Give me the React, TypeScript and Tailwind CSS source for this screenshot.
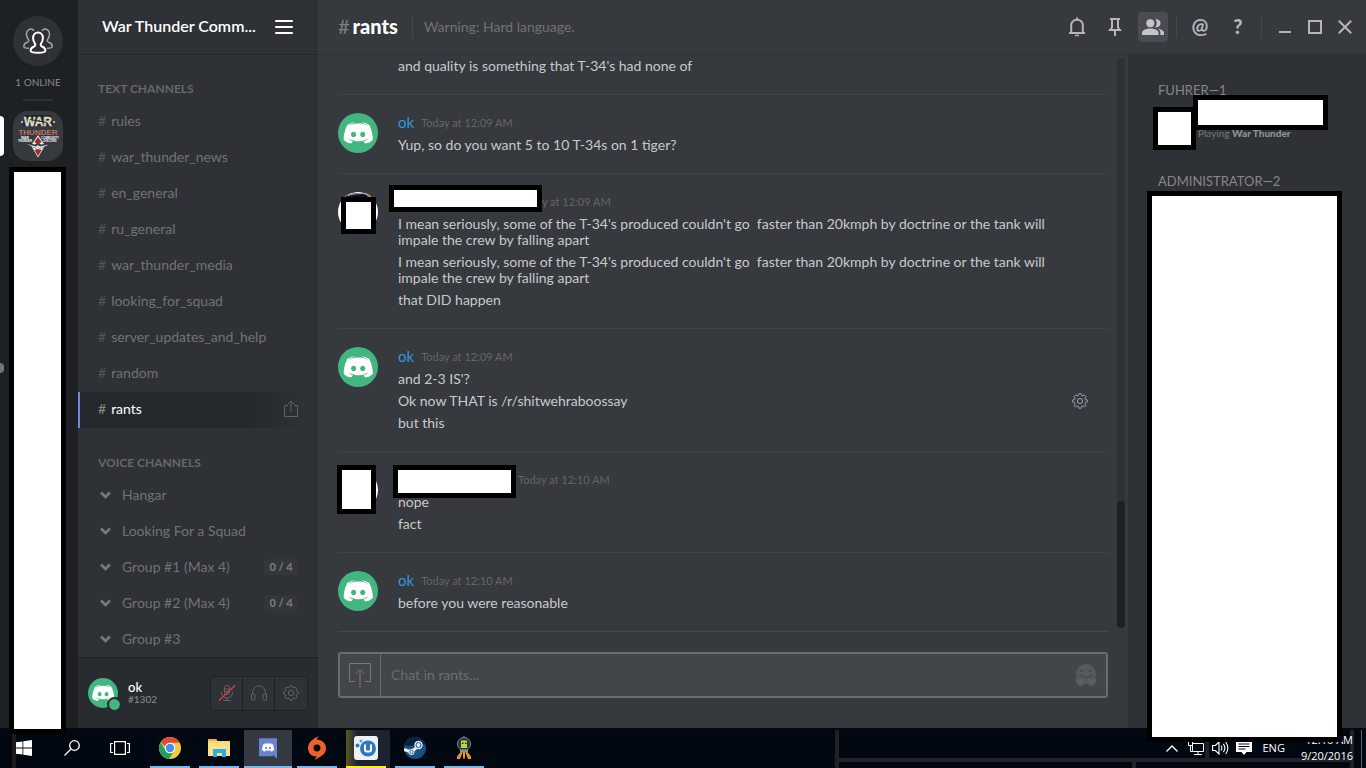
import React from "react";

const FACE =
  "M150.9 150.6s-3.6-4.3-6.6-8.1c13.1-3.7 18.1-11.9 18.1-11.9-4.1 2.7-8 4.6-11.5 5.9-5 2.1-9.8 3.5-14.5 4.3-9.6 1.8-18.4 1.3-25.9-.1-5.7-1.1-10.6-2.7-14.7-4.3-2.3-.9-4.8-2-7.3-3.4-.3-.2-.6-.3-.9-.5-.2-.1-.3-.2-.4-.3-1.8-1-2.8-1.7-2.8-1.7s4.8 8 17.5 11.8c-3 3.8-6.7 8.3-6.7 8.3-22.1-.7-30.5-15.2-30.5-15.2 0-32.2 14.4-58.3 14.4-58.3 14.4-10.8 28.1-10.5 28.1-10.5l1 1.2c-18 5.2-26.3 13.1-26.3 13.1s2.2-1.2 5.9-2.9c10.7-4.7 19.2-6 22.7-6.3.6-.1 1.1-.2 1.7-.2 6.1-.8 13-1 20.2-.2 9.5 1.1 19.7 3.9 30.1 9.6 0 0-7.9-7.5-24.9-12.7l1.4-1.6s13.7-.3 28.1 10.5c0 0 14.4 26.1 14.4 58.3 0 0-8.5 14.5-30.6 15.2z";
const EYES =
  "M104.4 103.9c-5.7 0-10.2 5-10.2 11.1s4.6 11.1 10.2 11.1c5.7 0 10.2-5 10.2-11.1.1-6.1-4.5-11.1-10.2-11.1zM140.9 103.9c-5.7 0-10.2 5-10.2 11.1s4.6 11.1 10.2 11.1c5.7 0 10.2-5 10.2-11.1s-4.5-11.1-10.2-11.1z";

function DiscordAvatar({ className }: { className: string }) {
  return (
    <svg viewBox="42 29 160 160" className={className} aria-hidden="true">
      <circle cx="122" cy="109" r="80" fill="#43b581" />
      <path d={FACE} fill="#fff" />
      <path d={EYES} fill="#43b581" />
    </svg>
  );
}

function Redaction({ className }: { className: string }) {
  return <div className={`border-5 border-black bg-white ${className}`} />;
}

function Gear({ className }: { className: string }) {
  return (
    <svg viewBox="0 0 16 16" className={className} fill="none" stroke="currentColor" aria-hidden="true">
      <path d="M6.6 2.3 7 .7h2l.4 1.6 1.5.6 1.5-.9 1.5 1.5-.9 1.5.6 1.5 1.7.5v2l-1.7.4-.6 1.5.9 1.5-1.5 1.5-1.5-.9-1.5.6L9 15.3H7l-.4-1.7-1.5-.6-1.5.9-1.5-1.5.9-1.5-.6-1.5L.7 9V7l1.7-.5.6-1.5-.9-1.5L3.6 2l1.5.9z" strokeLinejoin="round" />
      <circle cx="8" cy="8" r="2.6" />
    </svg>
  );
}

/* ---------- server rail ---------- */

function ServerRail() {
  return (
    <nav aria-label="Servers" className="relative z-10 flex w-[78px] shrink-0 flex-col bg-[#1e2124]">
      <div className="flex w-[76px] flex-col items-center pt-4">
        <button aria-label="Friends" className="flex size-[50px] items-center justify-center rounded-full bg-[#2e3136]">
          <svg viewBox="0 0 30 26" className="h-[26px] w-[30px]" fill="none" strokeLinecap="round" aria-hidden="true">
            <g stroke="#a3a5a8" strokeWidth="1.5">
              <path d="M10.500 2.200C7-.4 3 2.200 3.500 6.600c.2 2 .9 3.600 2 5 .6 1.600-.2 2.300-1.800 2.900C1.600 15.300.8 16.500.8 18.600c0 1.200 2.400 1.700 4.700 1.700" />
              <path d="M19.500 2.200C23-.4 27 2.200 26.500 6.600c-.2 2-.9 3.600-2 5-.6 1.600.2 2.300 1.800 2.900 2.100.8 2.900 2 2.900 4.100 0 1.200-2.400 1.700-4.700 1.700" />
            </g>
            <path d="M15 4.500c-3 0-4.900 2.300-4.900 5.500 0 2.600.9 4.500 2 5.900.5 1.600-.1 2.300-1.500 2.900-2 .8-3 1.700-3 4 0 1.600 4 2 7.400 2s7.400-.4 7.400-2c0-2.300-1-3.200-3-4-1.400-.6-2-1.300-1.500-2.900 1.100-1.400 2-3.300 2-5.900 0-3.200-1.900-5.500-4.900-5.500z" stroke="#fff" strokeWidth="2" />
          </svg>
        </button>
        <div className="mt-2 h-4 text-[10px] leading-4 text-[#85878a]">1 ONLINE</div>
        <div className="mt-[9px] h-0.5 w-[30px] bg-[#2e3136]" />
        <div className="mt-2.5">
          <button aria-label="War Thunder Community" className="block size-[50px] overflow-hidden rounded-[15px] bg-[#36393e]">
            <svg viewBox="0 0 50 50" className="size-full" aria-hidden="true">
              <path d="M12 4h26l2 11H10z" fill="#1c1f24" opacity=".8" />
              <g textAnchor="middle" fontFamily="Liberation Sans, sans-serif" fontWeight="700">
                <text x="25" y="14.500" fontSize="12" fill="#dcd8c2" stroke="#dcd8c2" strokeWidth=".4">WAR</text>
                <text x="25" y="23.500" fontSize="8" fill="#c9806e" stroke="#7a3f35" strokeWidth=".2">THUNDER</text>
                <text x="12" y="27.500" fontSize="3.400" fill="#fff">WAR</text>
                <text x="12" y="30.500" fontSize="2.900" fill="#fff">THUNDER</text>
                <text x="37" y="27.500" fontSize="2.900" fill="#fff">COMMUNITY</text>
                <text x="37" y="30.500" fontSize="2.900" fill="#fff">DISCORD</text>
              </g>
              <path d="M17 8.500 34 11.500" stroke="#23262b" strokeWidth="1" />
              <circle cx="9" cy="11" r="1" fill="#ddd" />
              <circle cx="41" cy="11" r="1" fill="#ddd" />
              <path d="M25 24 32 34.500 25 46.500 18 34.500z" fill="#e9e9e9" />
              <path d="M25 26 28.500 31 25 33.500 21.500 31zM25 38l3.500 1L25 45 21.500 39z" fill="#a8272b" />
              <path d="M13 31.500 22 33.500l3-2 3 2 9-1.500-7 4.500-5 2-5-2z" fill="#3b3f44" />
              <path d="M14 33 23 35.500l2-1.500 2 1.500 9-2-9 4-2 .8-2-.8z" fill="#dfe1e3" />
            </svg>
          </button>
        </div>
      </div>
      <Redaction className="mt-1.5 -mb-1.5 ml-[9px] w-[57px] flex-1" />
      <div className="absolute top-[116px] left-0 h-10 w-1 rounded-r-[4px] bg-white" />
      <div className="absolute top-[363px] left-0 h-2.5 w-1 rounded-r-[5px] bg-[#72767a]" />
    </nav>
  );
}

/* ---------- channel list ---------- */

const textChannels = [
  "rules",
  "war_thunder_news",
  "en_general",
  "ru_general",
  "war_thunder_media",
  "looking_for_squad",
  "server_updates_and_help",
  "random",
  "rants",
];

const voiceChannels: { name: string; limit?: string }[] = [
  { name: "Hangar" },
  { name: "Looking For a Squad" },
  { name: "Group #1 (Max 4)", limit: "0 / 4" },
  { name: "Group #2 (Max 4)", limit: "0 / 4" },
  { name: "Group #3" },
];

function TextChannel({ name, active }: { name: string; active: boolean }) {
  return (
    <li
      className={`flex h-9 items-center border-l-2 pl-[18px] pr-5 text-sm ${
        active
          ? "border-[#7289da] bg-linear-to-r from-[#25282c] from-70% to-[#2e3136] to-95%"
          : "border-transparent"
      }`}
    >
      <a href="#channel" className="flex flex-1 gap-[5px] pb-0.5">
        <span className={active ? "text-[#8a8c8f]" : "text-[#515458]"}>#</span>
        <span className={active ? "text-white" : "text-[#707276]"}>{name}</span>
      </a>
      {active && (
        <button aria-label="Invite" className="pb-1 text-[#5d6064]">
          <svg viewBox="0 0 14 17" className="h-[17px] w-3.5" fill="none" stroke="currentColor" aria-hidden="true">
            <path d="M4 5.500H.5v11h13v-11H10M7 12V1M4 4l3-3 3 3" />
          </svg>
        </button>
      )}
    </li>
  );
}

function VoiceChannel({ name, limit }: { name: string; limit?: string }) {
  return (
    <li className="flex h-9 items-center pr-5 pb-0.5 pl-[22px] text-sm text-[#707276]">
      <svg viewBox="0 0 11 8" className="h-2 w-[11px]" fill="none" stroke="#77797c" strokeWidth="2.600" aria-hidden="true">
        <path d="M1 1.500 5.500 6 10 1.500" />
      </svg>
      <a href="#voice" className="ml-[11px] flex-1">
        {name}
      </a>
      {limit && <span className="flex h-4 w-[34px] items-center justify-center rounded-[4px] bg-[#33363b] text-[11px] font-black text-[#77797c]">{limit}</span>}
    </li>
  );
}

function Sidebar() {
  return (
    <aside className="flex w-60 shrink-0 flex-col bg-[#2e3136]">
      <header className="flex h-[55px] shrink-0 items-center justify-between border-b border-[#25282c] pr-[25px] pl-6">
        <h1 className="pb-0.5 text-base font-semibold text-white">War Thunder Comm...</h1>
        <button aria-label="Server menu" className="flex w-[18px] flex-col gap-1">
          <span className="h-0.5 rounded-xs bg-white" />
          <span className="h-0.5 rounded-xs bg-white" />
          <span className="h-0.5 rounded-xs bg-white" />
        </button>
      </header>
      <div className="min-h-0 flex-1 overflow-hidden pt-[26px]">
        <h2 className="mb-[7px] pl-5 text-xs leading-4 font-bold text-[#66686c]">TEXT CHANNELS</h2>
        <ul>
          {textChannels.map((name) => (
            <TextChannel key={name} name={name} active={name === "rants"} />
          ))}
        </ul>
        <h2 className="mt-[27px] mb-[7px] pl-5 text-xs leading-4 font-bold text-[#66686c]">VOICE CHANNELS</h2>
        <ul>
          {voiceChannels.map((c) => (
            <VoiceChannel key={c.name} {...c} />
          ))}
        </ul>
      </div>
      <footer className="flex h-[71px] shrink-0 items-center border-t border-[#1e2124] bg-[#282b30] px-2.5">
        <div className="relative">
          <DiscordAvatar className="size-[30px]" />
          <span className="absolute -right-[2px] -bottom-[2px] size-[11px] rounded-full bg-[#43b581] outline-2 outline-[#282b30]" />
        </div>
        <div className="ml-2.5 flex-1">
          <div className="text-[13px] leading-3 font-medium text-white">ok</div>
          <div className="text-[10px] leading-3 text-[#8a8c8f]">#1302</div>
        </div>
        <div className="flex h-[35px] divide-x divide-[#1e2124] rounded-[4px] border border-[#1e2124] bg-[#2e3136] text-[#5f6266]">
          <button aria-label="Unmute" className="flex w-8 items-center justify-center">
            <svg viewBox="0 0 18 18" className="size-[18px]" fill="none" stroke="currentColor" aria-hidden="true">
              <rect x="6.500" y="1.500" width="5" height="9" rx="2.500" />
              <path d="M3.500 8v1a5.500 5 0 0 0 11 0V8M9 14v2.500M5 16.500h8M7 5h4M7 7.500h4" />
              <path d="M1 16.500 17 1.500" stroke="#d84040" strokeWidth="1.400" />
            </svg>
          </button>
          <button aria-label="Deafen" className="flex w-8 items-center justify-center">
            <svg viewBox="0 0 18 18" className="size-[18px]" fill="none" stroke="currentColor" aria-hidden="true">
              <path d="M2.500 10V8.500a6.500 6.500 0 0 1 13 0V10" />
              <rect x="1.500" y="10" width="3.500" height="6" rx="1" />
              <rect x="13" y="10" width="3.500" height="6" rx="1" />
            </svg>
          </button>
          <button aria-label="User settings" className="flex w-8 items-center justify-center">
            <Gear className="size-4" />
          </button>
        </div>
      </footer>
    </aside>
  );
}

/* ---------- chat ---------- */

function TopBar() {
  return (
    <header className="flex h-[55px] shrink-0 items-center border-b border-[#2e3136] bg-[#36393e] pr-3.5 pl-5 text-[#b4b6b8]">
      <h2 className="flex gap-[3px] pb-0.5 text-xl font-black text-white">
        <span className="font-normal text-[#7e8083]">#</span>rants
      </h2>
      <div className="ml-3.5 h-[22px] w-px bg-[#44474c]" />
      <p className="ml-[11px] flex-1 text-sm text-[#707276]">Warning: Hard language.</p>
      <div className="flex items-center gap-2">
        <button aria-label="Notifications" className="flex size-[30px] items-center justify-center">
          <svg viewBox="0 0 18 20" className="h-5 w-[18px]" fill="none" stroke="currentColor" strokeWidth="2" aria-hidden="true">
            <path d="M3.200 16V8.500c0-3.600 2.500-5.800 5.800-5.800s5.800 2.200 5.800 5.800V16M1 16h16" />
            <path d="M8 1.500h2" />
            <path d="M7 18.500h4" strokeWidth="1.400" />
          </svg>
        </button>
        <button aria-label="Pinned messages" className="flex size-[30px] items-center justify-center">
          <svg viewBox="0 0 14 18" className="h-[18px] w-3.5" fill="none" stroke="currentColor" strokeWidth="2" aria-hidden="true">
            <path d="M2 1h10M4 1v8.500L2 12h10L10 9.500V1M7 12.500V18" />
          </svg>
        </button>
        <button aria-label="Member list" className="flex size-[30px] items-center justify-center rounded-[4px] bg-[#494d53]">
          <svg viewBox="0 0 22 16" className="h-4 w-[22px]" fill="#c3c5c8" aria-hidden="true">
            <circle cx="8.300" cy="4.200" r="4" />
            <path d="M13.300.4a4 4 0 1 1 0 7.600 5.600 5.600 0 0 0 0-7.600z" />
            <path d="M0 16v-2.200c0-2.900 5-4.300 8.300-4.300s8.300 1.400 8.300 4.300V16z" />
            <path d="M18.400 16v-2.200c0-1.600-.9-2.900-2.400-4 3 .5 6 1.900 6 4V16z" />
          </svg>
        </button>
      </div>
      <div className="mx-2 h-[22px] w-px bg-[#44474c]" />
      <div className="flex items-center gap-2">
        <button aria-label="Mentions" className="flex size-[30px] items-center justify-center pb-1 text-xl font-bold">@</button>
        <button aria-label="Help" className="flex size-[30px] items-center justify-center pb-0.5 text-xl font-black">?</button>
      </div>
      <div className="mx-2 h-[22px] w-px bg-[#44474c]" />
      <div className="ml-2 flex items-center gap-4">
        <button aria-label="Minimize">
          <svg viewBox="0 0 14 14" className="size-3.5" fill="none" stroke="currentColor" strokeWidth="2" aria-hidden="true">
            <path d="M1 12h12" />
          </svg>
        </button>
        <button aria-label="Maximize">
          <svg viewBox="0 0 14 14" className="size-3.5" fill="none" stroke="currentColor" strokeWidth="2" aria-hidden="true">
            <path d="M1 1h12v12H1z" />
          </svg>
        </button>
        <button aria-label="Close">
          <svg viewBox="0 0 14 14" className="size-3.5" fill="none" stroke="currentColor" strokeWidth="2" aria-hidden="true">
            <path d="M.8.8 13.200 13.200M13.200.8.8 13.200" />
          </svg>
        </button>
      </div>
    </header>
  );
}

function Message({ children, menu }: { children: React.ReactNode; menu?: boolean }) {
  return (
    <div className="flex items-center justify-between py-[3px] text-sm leading-4 text-[#c8c9cb]">
      <p className="max-w-[666px] whitespace-pre-wrap">{children}</p>
      {menu && (
        <button aria-label="Message options" className="mr-5 text-[#8fa3ad]">
          <Gear className="size-4" />
        </button>
      )}
    </div>
  );
}

function Group({
  avatar,
  name,
  time,
  last,
  children,
}: {
  avatar: React.ReactNode;
  name: React.ReactNode;
  time: string;
  last?: boolean;
  children: React.ReactNode;
}) {
  return (
    <article className={`flex shrink-0 gap-5 py-[17px] ${last ? "" : "border-b border-[#3f4247]"}`}>
      <div className="relative mt-px size-10 shrink-0">{avatar}</div>
      <div className="min-w-0 flex-1">
        <div className="relative flex h-[22px] items-center gap-[7px] pb-px">
          {name}
          <time className="pt-0.5 text-[11px] text-[#63656a]">{time}</time>
        </div>
        {children}
      </div>
    </article>
  );
}

const okName = <span className="text-[15px] text-[#3498db]">ok</span>;

const longRant =
  "I mean seriously, some of the T-34's produced couldn't go  faster than 20kmph by doctrine or the tank will impale the crew by falling apart";

function Chat() {
  return (
    <main className="flex min-w-0 flex-1 flex-col bg-[#36393e]">
      <div className="flex min-h-0 flex-1">
        <div className="flex min-w-0 flex-1 flex-col justify-end overflow-hidden pl-5">
          <div className="shrink-0 border-b border-[#3f4247] pb-[17px] pl-[60px]">
            <Message>and quality is something that T-34's had none of</Message>
          </div>
          <Group avatar={<DiscordAvatar className="size-10" />} name={okName} time="Today at 12:09 AM">
            <Message>Yup, so do you want 5 to 10 T-34s on 1 tiger?</Message>
          </Group>
          <Group
            avatar={
              <>
                <svg viewBox="0 0 40 40" className="size-10" aria-hidden="true">
                  <circle cx="20" cy="20" r="20" fill="#fff" />
                  <path d="M7 5C14 0 26-1 34 6v6H7z" fill="#0d1620" />
                  <path d="M29 1.500 33 4v2l-4-2z" fill="#c39a2c" />
                  <path d="M10 3.500C16 1.500 24 1 29 2" stroke="#aab" fill="none" />
                </svg>
                <Redaction className="absolute top-[5px] left-[3px] h-[37px] w-[35px]" />
              </>
            }
            name={
              <>
                <span className="w-[114px]" />
                <Redaction className="absolute -top-1.5 -left-[9px] h-[27px] w-[153px]" />
              </>
            }
            time="Today at 12:09 AM"
          >
            <Message>{longRant}</Message>
            <Message>{longRant}</Message>
            <Message>that DID happen</Message>
          </Group>
          <Group avatar={<DiscordAvatar className="size-10" />} name={okName} time="Today at 12:09 AM">
            <Message>and 2-3 IS'?</Message>
            <Message menu>Ok now THAT is /r/shitwehraboossay</Message>
            <Message>but this</Message>
          </Group>
          <Group
            avatar={
              <>
                <div className="size-10 rounded-full bg-white" />
                <Redaction className="absolute -top-[5px] -left-px h-[49px] w-[39px]" />
              </>
            }
            name={
              <>
                <span className="w-[113px]" />
                <Redaction className="absolute -top-1 -left-[5px] h-[33px] w-[123px]" />
              </>
            }
            time="Today at 12:10 AM"
          >
            <Message>nope</Message>
            <Message>fact</Message>
          </Group>
          <Group avatar={<DiscordAvatar className="size-10" />} name={okName} time="Today at 12:10 AM" last>
            <Message>before you were reasonable</Message>
          </Group>
        </div>
        <div className="my-[3px] mr-[3px] ml-[9px] flex w-2 flex-col justify-end rounded-[4px] bg-[#2e3136]">
          <div className="h-[127px] rounded-[4px] bg-[#1e2124]" />
        </div>
      </div>
      <form className="mx-5 shrink-0 border-t border-[#44474c] pt-5 pb-[30px]">
        <div className="flex h-[46px] items-stretch rounded-[3px] border-2 border-[#6a6d70] bg-[#424549]">
          <button type="button" aria-label="Upload a file" className="flex w-[41px] items-center justify-center border-r border-[#6a6d70] text-[#77797c]">
            <svg viewBox="0 0 22 26" className="h-[26px] w-[22px]" fill="none" stroke="currentColor" aria-hidden="true">
              <path d="M6 19.500H.5v-18h21v18H16M11 25.500V8M6.500 12 11 7.500l4.500 4.500" />
            </svg>
          </button>
          <input aria-label="Chat in rants" placeholder="Chat in rants..." className="min-w-0 flex-1 bg-transparent pl-2.5 text-sm text-white outline-none placeholder:text-[#6a6d70]" />
          <button type="button" aria-label="Emoji" className="mr-[9px] flex items-center">
            <svg viewBox="0 0 22 22" className="size-[22px]" aria-hidden="true">
              <circle cx="11" cy="10" r="10" fill="#565a5e" />
              <path d="M5 7.500q1.500-2 3.500 0M13.500 7.500q2-2 3.500 0M5 10.500q6 6 12 0" fill="none" stroke="#44474b" strokeWidth="1.200" />
              <path d="M.5 13.500 3 15l1.500-3 1.500.5-.5 2.500L8 13.500l1.500 2L9 20l-2.500 2H4L.8 18zM21.500 13.500 19 15l-1.500-3-1.500.5.5 2.500-2.500-1.500-1.500 2L13 20l2.500 2H18l3.200-4z" fill="#5b5f63" stroke="#4c4f54" strokeWidth=".6" />
            </svg>
          </button>
        </div>
      </form>
    </main>
  );
}

function Members() {
  return (
    <aside className="relative z-10 w-[238px] shrink-0 bg-[#2e3136] pt-[27px] pl-[30px]">
      <h3 className="text-[13px] leading-4 text-[#85878a]">FUHRER—1</h3>
      <p className="mt-[27px] pl-10 text-[10px] leading-4 text-[#77797c]">
        Playing <strong className="font-black text-[#8f9194]">War Thunder</strong>
      </p>
      <h3 className="mt-8 text-[13px] leading-4 text-[#85878a]">ADMINISTRATOR—2</h3>
      <Redaction className="absolute top-[52px] left-[25px] size-[43px]" />
      <Redaction className="absolute top-10 left-[65px] h-[35px] w-[135px]" />
      <Redaction className="absolute top-[136px] -bottom-3.5 left-[19px] w-[195px]" />
    </aside>
  );
}

/* ---------- taskbar ---------- */

function AppButton({
  label,
  className = "",
  bar = "bg-[#76b9ed] w-10",
  children,
}: {
  label: string;
  className?: string;
  bar?: string;
  children: React.ReactNode;
}) {
  return (
    <button aria-label={label} className={`flex w-12 flex-col items-center ${className}`}>
      <span className="flex flex-1 items-center">{children}</span>
      <span className={`h-0.5 ${bar}`} />
    </button>
  );
}

function Taskbar() {
  return (
    <footer className="relative flex h-10 shrink-0 items-stretch border-t-2 border-[#080808] bg-[#020812] font-['Open_Sans','Noto_Sans',sans-serif] text-[11px] text-white">
      <div className="absolute top-0 bottom-0 left-[835px] w-1 bg-[#202124]" />
      <div className="absolute right-4 bottom-1.5 left-[839px] h-1 bg-[#202124]" />
      <div className="absolute top-0 right-3 bottom-0 w-1 bg-[#202124]" />
      <div className="absolute top-3 bottom-2.5 left-[1205px] w-1 bg-[#202124]" />
      <div className="absolute bottom-0 left-[1132px] h-1.5 w-1 bg-[#202124]" />
      <div className="absolute top-0 bottom-0 left-3 w-1 bg-[#1b1b1d]" />
      <div className="relative flex pb-0.5">
        <button aria-label="Start" className="flex w-12 items-center justify-center">
          <svg viewBox="0 0 16 16" className="size-4" fill="#fff" aria-hidden="true">
            <path d="M0 2.300 6.500 1.400v6.200H0zM7.300 1.300 16 0v7.600H7.300zM0 8.400h6.500v6.200L0 13.700zM7.300 8.400H16V16l-8.700-1.300z" />
          </svg>
        </button>
        <button aria-label="Search" className="flex w-12 items-center justify-center">
          <svg viewBox="0 0 16 16" className="size-4" fill="none" stroke="#fff" strokeWidth="1.300" aria-hidden="true">
            <circle cx="10.500" cy="5.500" r="4.800" />
            <path d="M7 9 .5 15.500" />
          </svg>
        </button>
        <button aria-label="Task view" className="flex w-12 items-center justify-center">
          <svg viewBox="0 0 20 14" className="h-3.5 w-5" fill="none" stroke="#fff" strokeWidth="1.200" aria-hidden="true">
            <path d="M4.600.6h10.800v12.800H4.600zM3 2.500H.6v9H3M17 2.500h2.400v9H17" />
          </svg>
        </button>
      </div>
      <div className="relative ml-0.5 flex gap-px">
        <AppButton label="Chrome">
          <svg viewBox="0 0 22 22" className="size-[22px]" aria-hidden="true">
            <circle cx="11" cy="11" r="11" fill="#f7c93e" />
            <path d="M11 0a11 11 0 0 1 9.600 5.800H11a5.200 5.200 0 0 0-5 3.800L1.900 4.900A11 11 0 0 1 11 0z" fill="#dd4b3e" />
            <path d="M1.700 5.200A11 11 0 0 0 10 22l4.400-7.100A5.200 5.200 0 0 1 6 12.500z" fill="#1da261" />
            <circle cx="11" cy="11" r="5.200" fill="#fff" />
            <circle cx="11" cy="11" r="4.200" fill="#4a8af4" />
          </svg>
        </AppButton>
        <AppButton label="File Explorer">
          <svg viewBox="0 0 22 18" className="h-[18px] w-[22px]" aria-hidden="true">
            <path d="M0 0h8l1.500 2H22v15H0z" fill="#fbd667" />
            <path d="M0 0h8l1 2H0z" fill="#e9b53c" />
            <path d="M0 4h22v13H0z" fill="#fde184" />
            <path d="M5 18v-8h13v8h-4v-4H9v4z" fill="#25b0ea" />
          </svg>
        </AppButton>
        <AppButton label="Discord" className="bg-[#353a42]" bar="w-12 bg-[#76b9ed]">
          <svg viewBox="35 20 175 201" className="h-[21px] w-[18px]" aria-hidden="true">
            <path d="M189.500 20H35v176.400h133.900l-5.300-18.500 12.800 11.900 12.100 11.200 21.500 19V20z" fill="#6a83cf" />
            <path d={FACE} fill="#fff" />
            <path d={EYES} fill="#6a83cf" />
          </svg>
        </AppButton>
        <AppButton label="Origin">
          <svg viewBox="0 0 18 24" className="h-6 w-[18px]" aria-hidden="true">
            <path d="M11 0 8.500 3.500C14 3.500 18 7 18 12.200c0 6-5 8.300-11.500 11.800l2.200-3.500C3.500 20.500 0 17 0 12 0 6.500 4.500 3 11 0z" fill="#ee5f2b" />
            <circle cx="9" cy="12" r="3.400" fill="#050b15" />
          </svg>
        </AppButton>
        <AppButton
          label="Updater"
          className="bg-linear-to-r from-transparent from-[4px] via-[#5e5a17] via-[4px] to-[#1c2230] to-[15px]"
          bar="w-10 bg-[#fff100]"
        >
          <svg viewBox="0 0 24 24" className="size-6" aria-hidden="true">
            <rect width="24" height="24" rx="3" fill="#eef1f4" />
            <circle cx="14" cy="12.500" r="8" fill="#2f78c0" />
            <path d="M11 8.500v5a2 2 0 0 0 2 2h2a2 2 0 0 0 2-2v-5" fill="none" stroke="#fff" strokeWidth="2" />
            <circle cx="3.500" cy="9.500" r="2" fill="#2f78c0" />
            <circle cx="7" cy="5" r="1.500" fill="#54a0dd" />
          </svg>
        </AppButton>
        <AppButton label="Steam">
          <svg viewBox="0 0 22 22" className="size-[22px]" aria-hidden="true">
            <circle cx="11" cy="11" r="11" fill="#175082" />
            <path d="M.5 8A11 11 0 0 1 21.500 8Q17 6 11 8T.5 8z" fill="#0c1f3c" />
            <path d="M0 12.500 7 15l5-4" stroke="#e4edf4" strokeWidth="3" fill="none" />
            <circle cx="14.500" cy="8" r="4.200" fill="#e4edf4" />
            <circle cx="14.500" cy="8" r="2.500" fill="none" stroke="#175082" />
            <circle cx="7.500" cy="15" r="3" fill="#e4edf4" />
            <circle cx="7.500" cy="15" r="1.700" fill="none" stroke="#175082" strokeWidth=".8" />
          </svg>
        </AppButton>
        <AppButton label="Kerbal Space Program">
          <svg viewBox="0 0 16 24" className="h-6 w-4" aria-hidden="true">
            <path d="M8 0v4" stroke="#999" />
            <circle cx="8" cy="8" r="6.500" fill="#30343a" stroke="#83878c" />
            <path d="M5 4.500h6V12H5z" fill="#b5dc3b" />
            <path d="M6 6.500h1.500V8H6zM9 6.500h1.500V8H9z" fill="#1c2a08" />
            <path d="M4 13.500h8V16H4z" fill="#8d9094" />
            <path d="M4.500 16h2.300L4 23H1v-2.500zM9.200 16h2.300L15 20.500V23h-3zM7 16h2v6.500H7z" fill="#e59324" />
          </svg>
        </AppButton>
      </div>
      <div className="relative ml-auto flex items-center pr-2 pb-0.5">
        <svg viewBox="0 0 12 7" className="mr-2.5 h-[7px] w-3" fill="none" stroke="#fff" strokeWidth="1.300" aria-hidden="true">
          <path d="M.5 6.500 6 1l5.500 5.500" />
        </svg>
        <svg viewBox="0 0 16 14" className="mr-2 h-3.5 w-4" fill="none" stroke="#fff" aria-hidden="true">
          <path d="M4.500 2.500h11v8h-11zM10 10.500v3M6 13.500h8" />
          <path d="M.5.500h4v4h-4zM2.500 4.500v6h2" fill="#020812" />
        </svg>
        <svg viewBox="0 0 17 14" className="mr-[7px] h-3.5 w-[17px]" fill="none" stroke="#fff" strokeWidth="1.100" aria-hidden="true">
          <path d="M.6 4.500h2.800L7 1v12L3.400 9.500H.6zM9 4.500q1.800 2.500 0 5M11.300 2.800q3.200 4.200 0 8.400M13.600 1q4.600 6 0 12" />
        </svg>
        <svg viewBox="0 0 16 14" className="mr-2.5 h-3.5 w-4" aria-hidden="true">
          <path d="M0 0h16v11h-5.500L8 14l-2.500-3H0z" fill="#fff" />
          <path d="M2.500 3h11M2.500 5.500h11M2.500 8h7" stroke="#020812" />
        </svg>
        <span className="mr-4">ENG</span>
        <div className="leading-4">
          <div className="text-right">12:10 AM</div>
          <div>9/20/2016</div>
        </div>
      </div>
      <div className="w-[5px] border-l border-[#5d6064]" />
    </footer>
  );
}

export default function App() {
  return (
    <div className="flex h-screen flex-col overflow-hidden bg-[#36393e] font-['Lato','Noto_Sans',sans-serif]">
      <div className="flex min-h-0 flex-1">
        <ServerRail />
        <Sidebar />
        <div className="flex min-w-0 flex-1 flex-col">
          <TopBar />
          <div className="flex min-h-0 flex-1">
            <Chat />
            <Members />
          </div>
        </div>
      </div>
      <Taskbar />
    </div>
  );
}
